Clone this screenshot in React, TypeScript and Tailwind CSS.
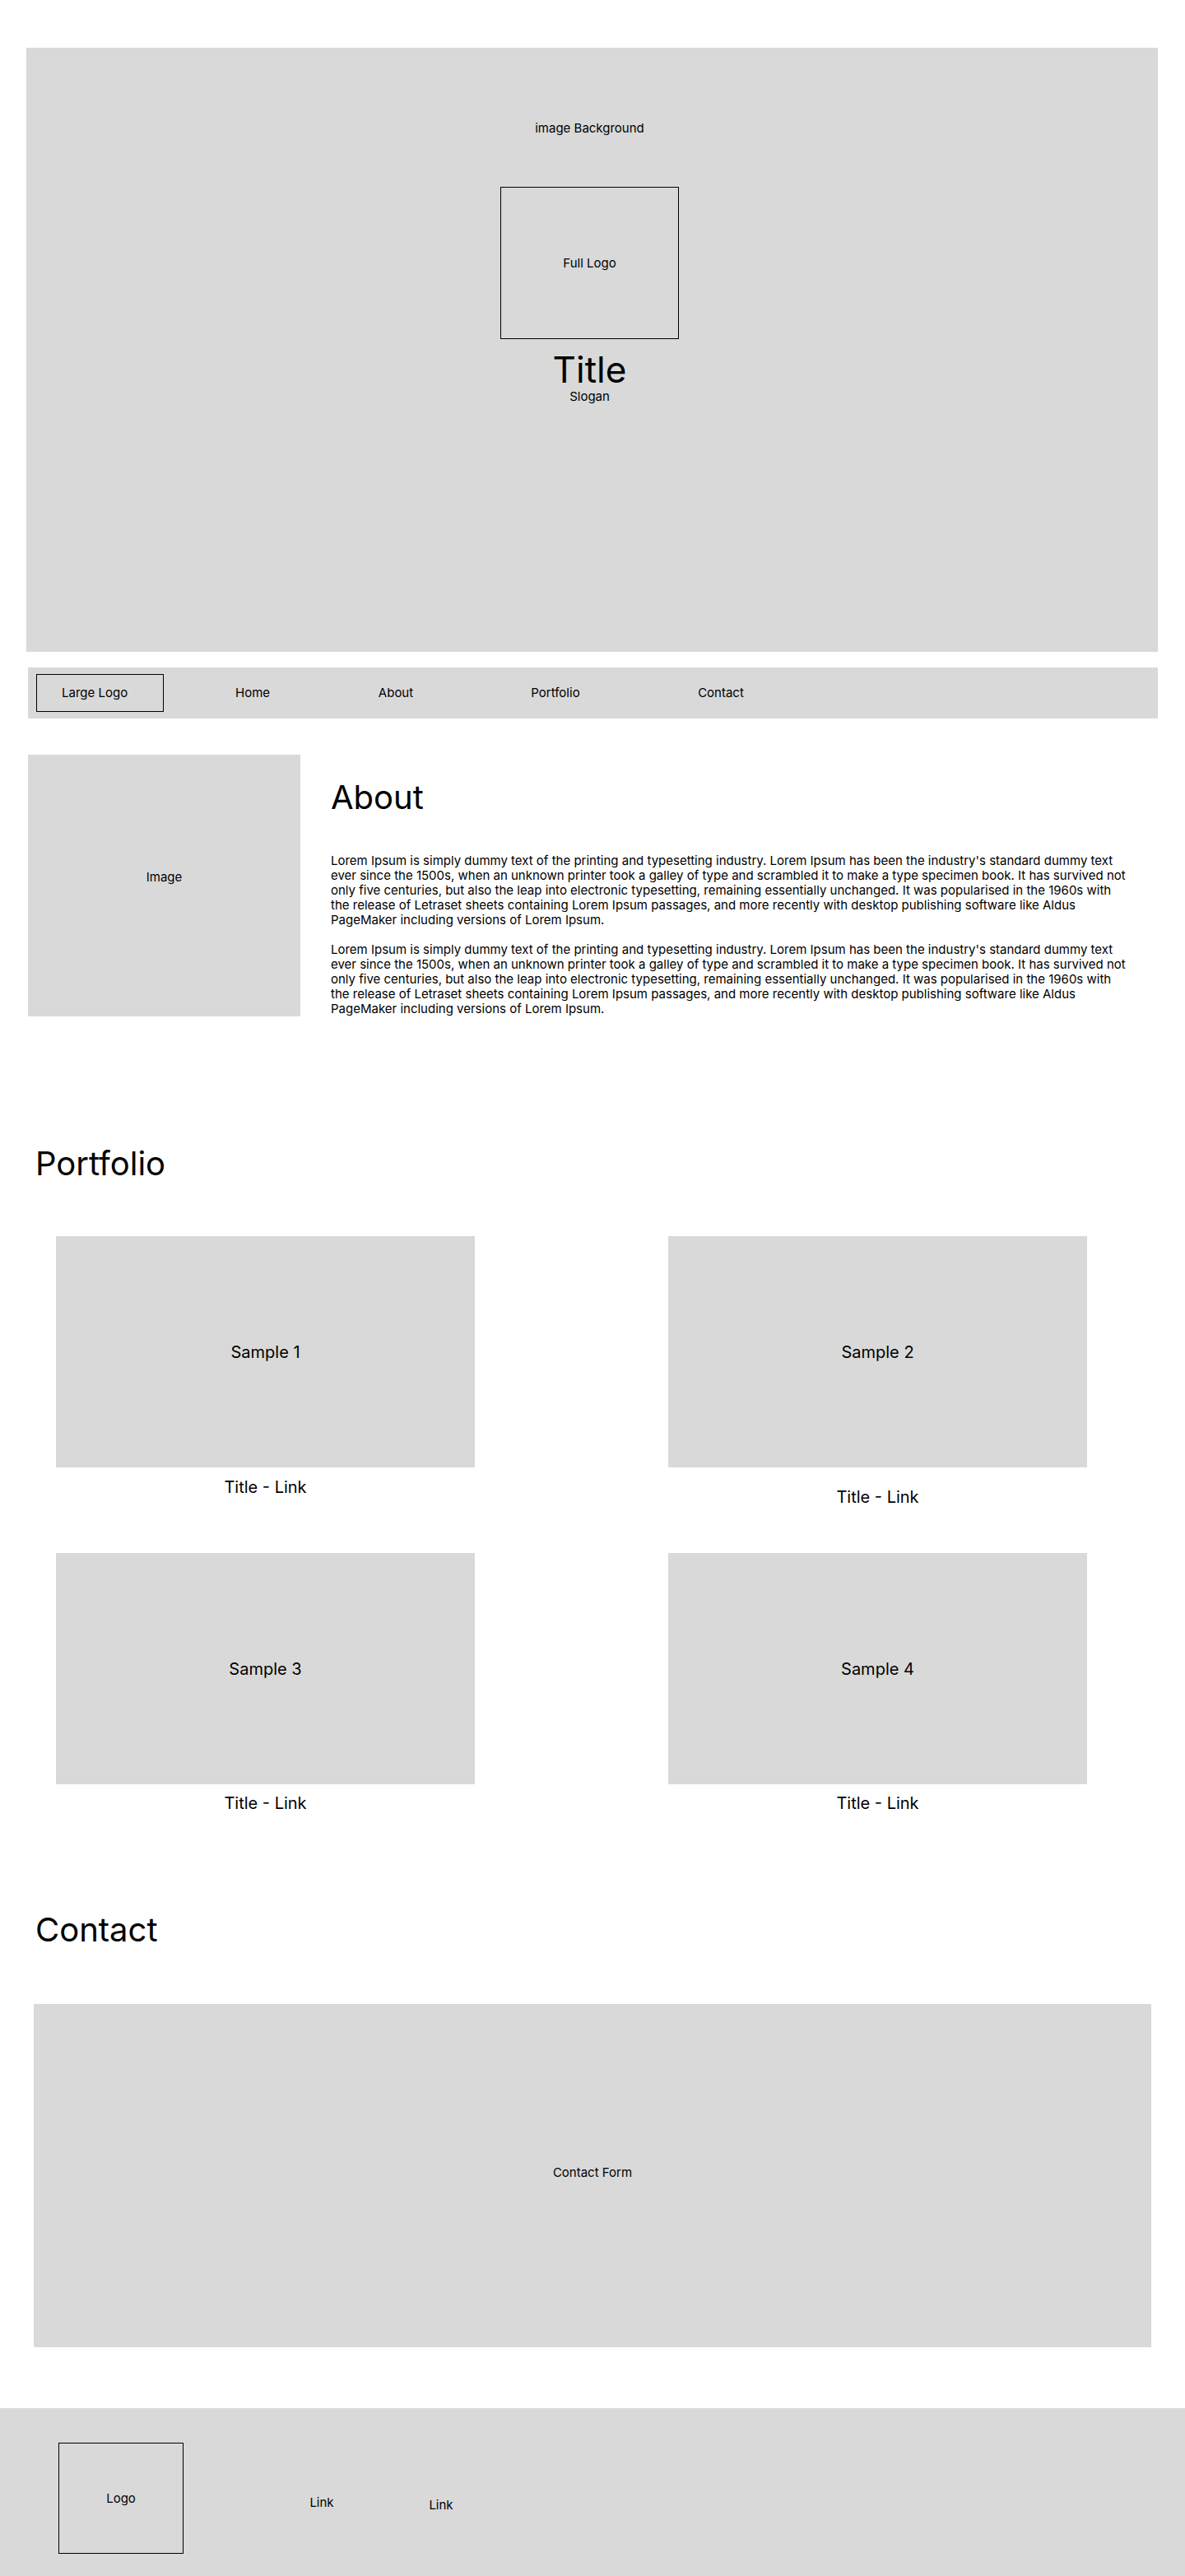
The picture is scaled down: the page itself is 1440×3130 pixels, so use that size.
const navItems = [
  { label: "Home", offset: "ml-[48px]" },
  { label: "About", offset: "ml-[54px]" },
  { label: "Portfolio", offset: "ml-[74px]" },
  { label: "Contact", offset: "ml-[81px]" },
];

const lorem =
  "Lorem Ipsum is simply dummy text of the printing and typesetting industry. Lorem Ipsum has been the industry's standard dummy text ever since the 1500s, when an unknown printer took a galley of type and scrambled it to make a type specimen book. It has survived not only five centuries, but also the leap into electronic typesetting, remaining essentially unchanged. It was popularised in the 1960s with the release of Letraset sheets containing Lorem Ipsum passages, and more recently with desktop publishing software like Aldus PageMaker including versions of Lorem Ipsum.";

const samples = [
  { name: "Sample 1", titleGap: "mt-[12px]" },
  { name: "Sample 2", titleGap: "mt-[24px]" },
  { name: "Sample 3", titleGap: "mt-[11px]" },
  { name: "Sample 4", titleGap: "mt-[11px]" },
];

const App = () => {
  return (
    <div className="w-[1440px] min-h-[3130px] bg-white text-black font-['Inter','Liberation_Sans',sans-serif]">
      {/* Hero */}
      <header className="pt-[58px] pl-[32px]">
        <div className="w-[1375px] h-[734px] bg-[#d9d9d9] flex flex-col items-center pr-[6px]">
          <p className="mt-[89px] text-[15px] leading-[18px]">image Background</p>
          <div className="mt-[62px] w-[217px] h-[185px] border border-black flex items-center justify-center text-[15px] leading-[18px]">
            Full Logo
          </div>
          <h1 className="mt-[15px] text-[44px] leading-[44px] font-normal">Title</h1>
          <p className="mt-[2px] text-[15px] leading-[18px]">Slogan</p>
        </div>
      </header>

      {/* Nav */}
      <nav className="mt-[19px] ml-[34px] w-[1373px] h-[62px] bg-[#d9d9d9] flex items-center">
        <div className="ml-[10px] w-[155px] h-[46px] border border-black flex items-center pl-[30px] text-[15px] leading-[18px]">
          Large Logo
        </div>
        {navItems.map((item) => (
          <a
            key={item.label}
            className={`${item.offset} w-[120px] text-center text-[15px] leading-[18px]`}
          >
            {item.label}
          </a>
        ))}
      </nav>

      {/* About */}
      <section className="mt-[44px] pl-[34px] flex">
        <div className="w-[331px] h-[318px] bg-[#d9d9d9] flex items-center justify-center pb-[20px] text-[15px] leading-[18px]">
          Image
        </div>
        <div className="ml-[37px] w-[970px] pt-[28px]">
          <h2 className="text-[40px] leading-[48px] font-normal">About</h2>
          <p className="mt-[44px] text-[15px] leading-[18px]">{lorem}</p>
          <p className="mt-[18px] text-[15px] leading-[18px]">{lorem}</p>
        </div>
      </section>

      {/* Portfolio */}
      <section className="mt-[155px]">
        <h2 className="pl-[43px] text-[40px] leading-[48px] font-normal">Portfolio</h2>
        <div className="mt-[64px] pl-[68px] grid grid-cols-[509px_509px] gap-x-[235px] gap-y-[56px]">
          {samples.map((s) => (
            <div key={s.name} className="flex flex-col">
              <div className="h-[281px] bg-[#d9d9d9] flex items-center justify-center text-[20px] leading-[24px]">
                {s.name}
              </div>
              <p className={`${s.titleGap} text-center text-[20px] leading-[24px]`}>
                Title - Link
              </p>
            </div>
          ))}
        </div>
      </section>

      {/* Contact */}
      <section className="mt-[118px]">
        <h2 className="pl-[43px] text-[40px] leading-[48px] font-normal">Contact</h2>
        <div className="mt-[66px] ml-[41px] w-[1358px] h-[417px] bg-[#d9d9d9] flex items-center justify-center pb-[8px] text-[15px] leading-[18px]">
          Contact Form
        </div>
      </section>

      {/* Footer */}
      <footer className="mt-[74px] h-[204px] bg-[#d9d9d9] pt-[42px]">
        <div className="flex items-center">
          <div className="ml-[71px] w-[152px] h-[135px] border border-black flex items-center justify-center text-[15px] leading-[18px]">
            Logo
          </div>
          <a className="ml-[138px] mt-[11px] w-[60px] text-center text-[15px] leading-[18px]">Link</a>
          <a className="ml-[85px] mt-[17px] w-[60px] text-center text-[15px] leading-[18px]">Link</a>
        </div>
      </footer>
    </div>
  );
};

export default App;
